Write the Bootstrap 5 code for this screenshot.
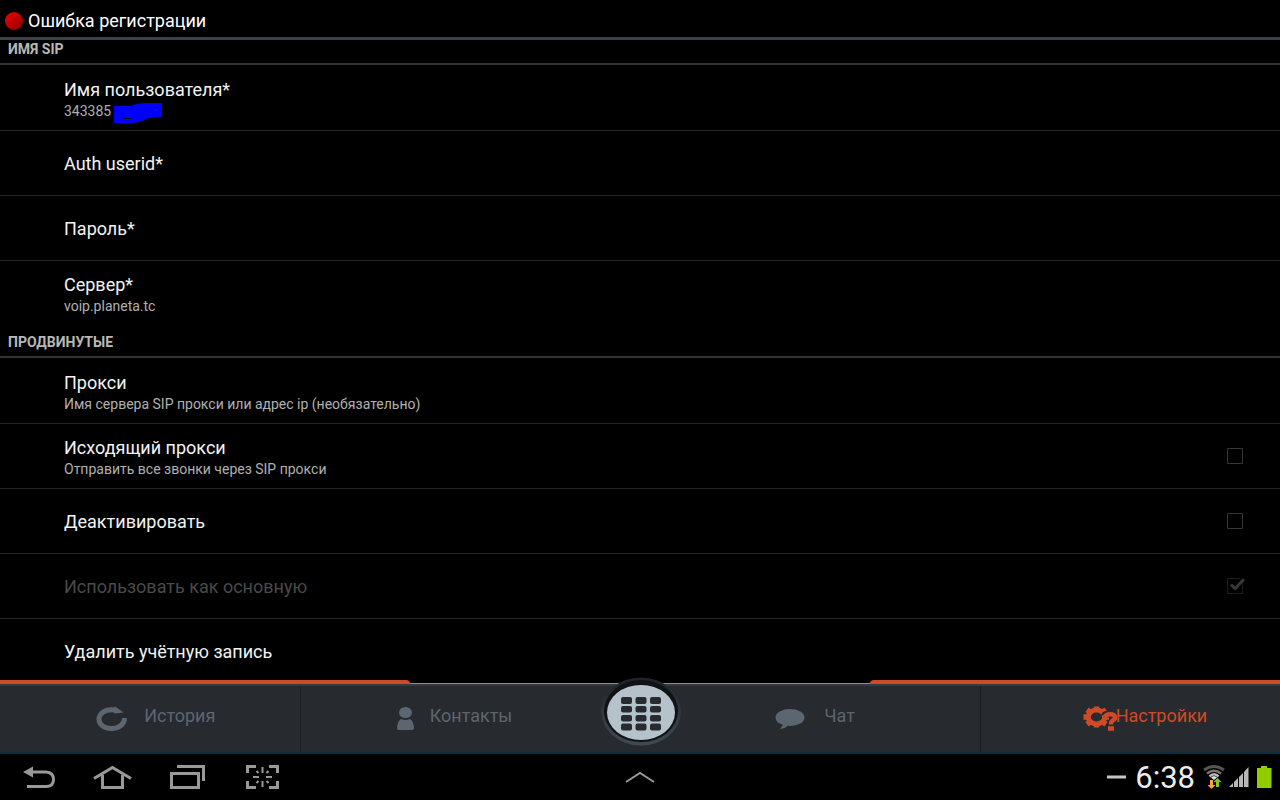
<!DOCTYPE html>
<html lang="ru" data-bs-theme="dark">
<head>
<meta charset="utf-8">
<meta name="viewport" content="width=device-width, initial-scale=1">
<title>Ошибка регистрации</title>
<link href="https://cdn.jsdelivr.net/npm/bootstrap@5.3.0/dist/css/bootstrap.min.css" rel="stylesheet">
<style>
body { font-family: Roboto, "Noto Sans", sans-serif; background: #000; color: #f3f3f3; font-size: 18px; line-height: 24px; }
svg { flex-shrink: 0; display: block; }
button { font: inherit; color: inherit; background: none; border: 0; padding: 0; }
.status-title { font-size: 18px; line-height: 24px; font-weight: 400; }
.app-head { height: 40px; padding: 4px 5px 0; gap: 5px; border-bottom: 3px solid #3a4249; }
.pref-list { min-height: 0; }
.group-title { font-size: 14px; line-height: 16px; font-weight: 700; color: #b8b8b8; padding: 8px 8px 6px; border-bottom: 2px solid #333; margin-bottom: 1px; }
.group-title.first { padding-top: 1px; }
.pref { width: 100%; height: 65px; padding: 2px 34px 0 64px; border-bottom: 1px solid #262626; text-align: start; }
.pref.last { border-bottom-color: transparent; }
.pref-sum { font-size: 14px; line-height: 18px; color: #b0b0b0; }
.pref.off { color: #4a4a4a; }
.scribble { margin: 1px 0 -3px 3px; }
.tick { appearance: none; width: 20px; height: 20px; margin: -2px 0 0; background: url("data:image/svg+xml,%3Csvg xmlns='http://www.w3.org/2000/svg' viewBox='0 0 20 20'%3E%3Cpath d='M1.500 2.500h15v15h-15z' fill='none' stroke='%23363636'/%3E%3C/svg%3E"); }
.tick:checked { background-image: url("data:image/svg+xml,%3Csvg xmlns='http://www.w3.org/2000/svg' viewBox='0 0 20 20'%3E%3Cpath d='M14.500 2.500h-13v15h15v-9' fill='none' stroke='%231e1e1e'/%3E%3Cpath d='M5 8.500l4 4L18 3.200' fill='none' stroke='%23383838' stroke-width='3'/%3E%3C/svg%3E"); }
.accent { height: 4px; border-bottom: 1px solid #8b8d8f; }
.accent div { width: 32%; height: 4px; background: #cf4b27; }
.accent div:first-child { border-top-right-radius: 6px; }
.accent div:last-child { border-top-left-radius: 6px; }
.tabs { display: grid; grid-template-columns: minmax(0,1fr) minmax(0,1fr) 78px minmax(0,1fr) minmax(0,1fr); height: 70px; background: #272a2e; border-top: 2px solid #353a3f; border-bottom: 2px solid #0b2c39; }
.tab { color: #5c6670; gap: 16px; padding-left: 32%; padding-bottom: 7px; }
.tab svg { margin-top: 6px; overflow: visible; }
.tab.edge-end { border-right: 1px solid #1f2226; }
.tab.edge-start { border-left: 1px solid #1b1e20; }
.tab.active { color: #cf4b27; }
.dial { margin: -16px -3px 0 -1px; }
.sysbar { display: grid; grid-template-columns: 1fr auto 1fr; height: 46px; color: #999; }
.sys-keys { padding-left: 23px; }
.clock { font-size: 31px; line-height: 36px; color: #ececec; margin: 2px 8px 0 9px; }
</style>
<script src="https://cdn.jsdelivr.net/npm/bootstrap@5.3.0/dist/js/bootstrap.bundle.min.js"></script>
</head>
<body>
<div class="d-flex flex-column vh-100 overflow-hidden">
  <header class="app-head d-flex align-items-center flex-shrink-0">
    <svg width="18" height="18" viewBox="0 0 18 18"><defs><linearGradient id="red" x2="1" y2="1"><stop offset=".2" stop-color="#e00000"/><stop offset="1" stop-color="#8a0000"/></linearGradient></defs><circle cx="9" cy="9" r="9" fill="url(#red)"/></svg>
    <h1 class="status-title m-0">Ошибка регистрации</h1>
  </header>

  <main class="pref-list flex-fill overflow-hidden">
    <h2 class="group-title first">ИМЯ SIP</h2>
    <button type="button" class="pref d-flex align-items-center"><span><span class="d-block">Имя пользователя*</span>
      <span class="pref-sum d-flex">343385<svg class="scribble" width="50" height="20" viewBox="0 0 50 20"><path d="M0 3L16 3L22 1L30 0H48V14L34 15L28 18L18 20H0Z" fill="#00f"/><path d="M10 15.500h7M40 4.500h4M8 10.500h1" stroke="#000"/></svg></span></span></button>
    <button type="button" class="pref d-flex align-items-center">Auth userid*</button>
    <button type="button" class="pref d-flex align-items-center">Пароль*</button>
    <button type="button" class="pref last d-flex align-items-center"><span><span class="d-block">Сервер*</span><span class="pref-sum d-block">voip.planeta.tc</span></span></button>

    <h2 class="group-title">ПРОДВИНУТЫЕ</h2>
    <button type="button" class="pref d-flex align-items-center"><span><span class="d-block">Прокси</span><span class="pref-sum d-block">Имя сервера SIP прокси или адрес ip (необязательно)</span></span></button>
    <label class="pref d-flex align-items-center justify-content-between" for="outbound"><span><span class="d-block">Исходящий прокси</span><span class="pref-sum d-block">Отправить все звонки через SIP прокси</span></span><input class="tick" type="checkbox" id="outbound"></label>
    <label class="pref d-flex align-items-center justify-content-between" for="deactivate">Деактивировать<input class="tick" type="checkbox" id="deactivate"></label>
    <label class="pref off d-flex align-items-center justify-content-between" for="primary">Использовать как основную<input class="tick" type="checkbox" id="primary" checked disabled></label>
    <button type="button" class="pref last d-flex align-items-center">Удалить учётную запись</button>
  </main>

  <footer class="flex-shrink-0">
    <div class="accent d-flex justify-content-between"><div></div><div></div></div>
    <nav class="tabs">
      <button type="button" class="tab edge-end d-flex align-items-center">
        <svg width="32" height="26" viewBox="0 0 32 26"><path d="M21 5Q18.500 3.800 15.500 3.800C8.500 3.800 3 7.800 3 13.300S8.500 22.500 15.500 22.500S28.500 18.500 28.500 12" fill="none" stroke="currentColor" stroke-width="5"/><path d="M18.500 0L22 2.500L27.500 6.500L18.500 7.500Z" fill="currentColor"/></svg>История</button>
      <button type="button" class="tab d-flex align-items-center">
        <svg width="17" height="23" viewBox="0 0 17 23"><ellipse cx="8.500" cy="5.500" rx="6.500" ry="5.500" fill="currentColor"/><path d="M4 12Q8.500 14 13 12Q16.500 14 17 21Q17 23 15 23H2Q0 23 0 21Q.5 14 4 12Z" fill="currentColor"/></svg>Контакты</button>
      <button type="button" class="dial" aria-label="Набор номера">
        <svg width="82" height="69" viewBox="0 0 82 69"><defs><linearGradient id="ring" x2="0" y2="1"><stop offset="0" stop-color="#1f2327"/><stop offset="1" stop-color="#404a54"/></linearGradient></defs>
          <ellipse cx="41" cy="34.500" rx="40" ry="34" fill="url(#ring)"/><ellipse cx="41" cy="34" rx="37" ry="31" fill="#101214"/><ellipse cx="41" cy="35.500" rx="34" ry="27.500" fill="#b6c2c9"/>
          <g fill="#272b30"><rect x="21" y="20" width="11" height="7" rx="2"/><rect x="35.500" y="20" width="11" height="7" rx="2"/><rect x="50" y="20" width="11" height="7" rx="2"/><rect x="21" y="29" width="11" height="6.500" rx="2"/><rect x="35.500" y="29" width="11" height="6.500" rx="2"/><rect x="50" y="29" width="11" height="6.500" rx="2"/><rect x="21" y="38" width="11" height="6.500" rx="2"/><rect x="35.500" y="38" width="11" height="6.500" rx="2"/><rect x="50" y="38" width="11" height="6.500" rx="2"/><rect x="21" y="46.500" width="11" height="7" rx="2"/><rect x="35.500" y="46.500" width="11" height="7" rx="2"/><rect x="50" y="46.500" width="11" height="7" rx="2"/></g></svg></button>
      <button type="button" class="tab d-flex align-items-center">
        <svg width="33" height="20" viewBox="0 0 33 20"><ellipse cx="15" cy="8.500" rx="14.500" ry="8.500" fill="currentColor"/><path d="M6 14L8 16L5 20Q11 19.500 13 16Z" fill="currentColor"/></svg>Чат</button>
      <button type="button" class="tab active edge-start d-flex align-items-center">
        <svg width="23" height="24" viewBox="0 0 23 24"><g fill="none" stroke="currentColor"><ellipse cx="19.500" cy="10" rx="8.200" ry="7" stroke-width="5"/><path d="M19.500 -.5v4M19.500 16.500v4M6.500 10h4M28 10h4M10 2.700l3.500 2.500M10 17.300l3.500-2.500M29 2.700l-3.500 2.500M29 17.300l-3.500-2.500" stroke-width="5.500"/></g><path d="M27 9Q28 6.800 32 6.800Q38 7.200 38 10.500Q38 12.500 35 14Q34 15 34 18V23" fill="none" stroke="#272a2e" stroke-width="6.500"/><path d="M28 9.800Q29 7.200 33 7.200Q38 7.200 38 10.500Q38 12.500 35.500 13.500Q34 14.500 34 17.500M31 21.500h6" fill="none" stroke="currentColor" stroke-width="4.500"/></svg>Настройки</button>
    </nav>
    <div class="sysbar align-items-center">
      <div class="sys-keys d-flex align-items-center">
        <button type="button" aria-label="Назад"><svg width="70" height="26" viewBox="0 0 70 26"><path d="M8 8H23Q30.500 8.500 30.500 15.500T23 22.500H4" fill="none" stroke="currentColor" stroke-width="3"/><path d="M0 8L10 2.500V13.500Z" fill="currentColor"/></svg></button>
        <button type="button" aria-label="Домой"><svg width="77" height="26" viewBox="0 0 77 26"><path d="M1 14.500L19.500 3.500L38 14.500M9.500 11V23.500H29.500V11" fill="none" stroke="currentColor" stroke-width="3"/></svg></button>
        <button type="button" aria-label="Недавние"><svg width="76" height="26" viewBox="0 0 76 26"><path d="M1.500 9.500H28.500V23.500H1.500ZM7 2.500H33.500V17" fill="none" stroke="currentColor" stroke-width="3"/></svg></button>
        <button type="button" aria-label="Снимок экрана"><svg width="34" height="26" viewBox="0 0 34 26"><path d="M10 2.500H1.500V9M23 2.500H31.500V9M10 23.500H1.500V17M23 23.500H31.500V17" fill="none" stroke="currentColor" stroke-width="3"/><path d="M16.500 3V9M16.500 17v6M7 13h6M20 13h6M10.500 7l2 2M22.500 7l-2 2M10.500 19l2-2M22.500 19l-2-2" stroke="currentColor" stroke-width="2"/></svg></button>
      </div>
      <button type="button" aria-label="Развернуть"><svg width="30" height="14" viewBox="0 0 30 14"><path d="M1 12L15 3L29 12" fill="none" stroke="currentColor" stroke-width="2"/></svg></button>
      <div class="d-flex align-items-center justify-content-end pe-2">
        <svg width="20" height="4" viewBox="0 0 20 4"><path d="M1 2h19" stroke="#c4c8c4" stroke-width="3"/></svg>
        <span class="clock">6:38</span>
        <svg width="22" height="24" viewBox="0 0 22 24"><g fill="none"><path d="M1 5Q11-2 21 5" stroke="#555" stroke-width="3"/><path d="M4 8.500Q11 3 18 8.500" stroke="#777" stroke-width="2.500"/><path d="M6.500 11.500Q11 7 15.500 11.500" stroke="#bbb" stroke-width="2.500"/></g><path d="M8 12.500Q11 9.500 14 12.500L11 15Z" fill="#ddd"/><path d="M7 15h3v5h2.500L8.500 24L4.500 20h2.500Z" fill="#ffa030"/><path d="M14.500 13l4 4h-2.500v5h-3v-5H10.500Z" fill="#84cc00"/></svg>
        <svg class="ms-1" width="20" height="20" viewBox="0 0 20 20"><path d="M0 20L4 16V20ZM5 15L9 11V20H5ZM10 10L14 6V20H10ZM15 5L19.500 0V20H15Z" fill="#b8b8b8"/></svg>
        <svg class="ms-2" width="15" height="22" viewBox="0 0 15 22"><path d="M4 0h6v2h4.500v20H0V2h4Z" fill="#91ce00"/></svg>
      </div>
    </div>
  </footer>
</div>
</body>
</html>
